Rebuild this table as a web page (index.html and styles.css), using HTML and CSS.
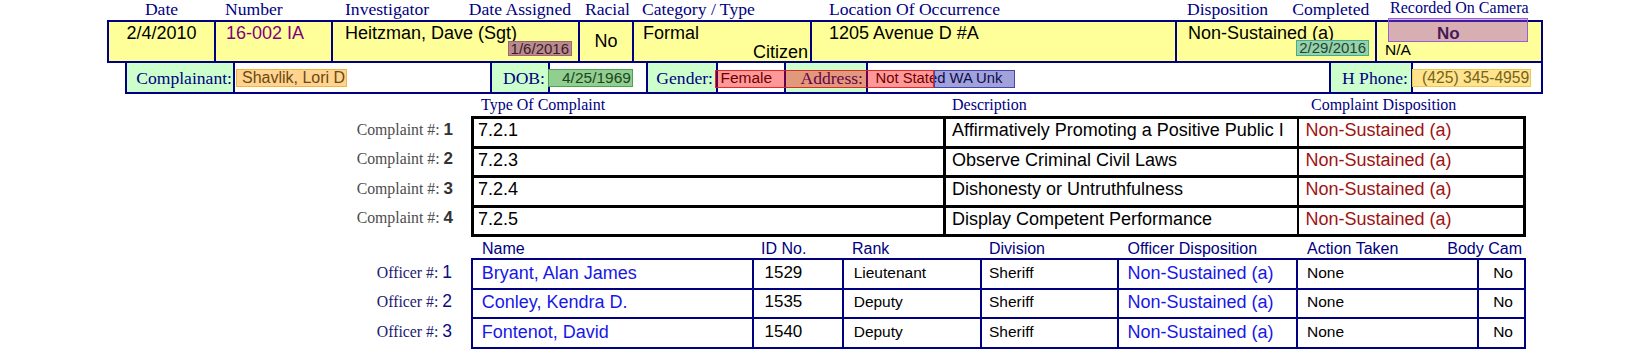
FILE: index.html
```html
<!DOCTYPE html>
<html lang="en">
<head>
<meta charset="utf-8">
<title>Case Record</title>
<link rel="stylesheet" href="styles.css">
</head>
<body>
<div class="sheet">
  <div class="top-labels">
    <div class="tl tl-date">Date</div>
    <div class="tl tl-num">Number</div>
    <div class="tl tl-inv"><span>Investigator</span><span>Date Assigned</span></div>
    <div class="tl tl-racial">Racial</div>
    <div class="tl tl-cat">Category / Type</div>
    <div class="tl tl-loc">Location Of Occurrence</div>
    <div class="tl tl-disp"><span>Disposition</span><span>Completed</span></div>
    <div class="tl tl-cam">Recorded On Camera</div>
  </div>

  <div class="case-row">
    <div class="cc cc-date">2/4/2010</div>
    <div class="cc cc-num">16-002 IA</div>
    <div class="cc cc-inv"><span>Heitzman, Dave (Sgt)</span><span class="hl hl-assigned">1/6/2016</span></div>
    <div class="cc cc-racial">No</div>
    <div class="cc cc-cat"><span>Formal</span><span class="cat-type">Citizen</span></div>
    <div class="cc cc-loc">1205 Avenue D #A</div>
    <div class="cc cc-disp"><span>Non-Sustained (a)</span><span class="hl hl-completed">2/29/2016</span></div>
    <div class="cc cc-cam"><span class="cam-val">No</span><span class="cam-na">N/A</span></div>
  </div>

  <div class="party-row">
    <div class="pl pl-first">Complainant:</div>
    <div class="pv pv-name"><span class="hl hl-name">Shavlik, Lori D</span></div>
    <div class="pl">DOB:</div>
    <div class="pv pv-dob"><span class="hl hl-dob">4/25/1969</span></div>
    <div class="pl">Gender:</div>
    <div class="pv pv-gender">Female</div>
    <div class="pl">Address:</div>
    <div class="pv pv-addr">Not Stated WA Unk</div>
    <div class="pl">H Phone:</div>
    <div class="pv pv-phone"><span class="hl hl-phone">(425) 345-4959</span></div>
  </div>

  <div class="complaints">
    <div></div>
    <div class="c-head c-h1">Type Of Complaint</div>
    <div class="c-head c-h2">Description</div>
    <div class="c-head c-h3">Complaint Disposition</div>

    <div class="c-lbl first">Complaint #: <b>1</b></div>
    <div class="c-cell c-t first">7.2.1</div>
    <div class="c-cell c-d first">Affirmatively Promoting a Positive Public I</div>
    <div class="c-cell c-s first">Non-Sustained (a)</div>

    <div class="c-lbl">Complaint #: <b>2</b></div>
    <div class="c-cell c-t">7.2.3</div>
    <div class="c-cell c-d">Observe Criminal Civil Laws</div>
    <div class="c-cell c-s">Non-Sustained (a)</div>

    <div class="c-lbl">Complaint #: <b>3</b></div>
    <div class="c-cell c-t">7.2.4</div>
    <div class="c-cell c-d">Dishonesty or Untruthfulness</div>
    <div class="c-cell c-s">Non-Sustained (a)</div>

    <div class="c-lbl">Complaint #: <b>4</b></div>
    <div class="c-cell c-t">7.2.5</div>
    <div class="c-cell c-d">Display Competent Performance</div>
    <div class="c-cell c-s">Non-Sustained (a)</div>
  </div>

  <div class="officers">
    <div></div>
    <div class="o-head oh-name">Name</div>
    <div class="o-head oh-id">ID No.</div>
    <div class="o-head oh-rank">Rank</div>
    <div class="o-head oh-div">Division</div>
    <div class="o-head oh-disp">Officer Disposition</div>
    <div class="o-head oh-act">Action Taken</div>
    <div class="o-head oh-cam">Body Cam</div>

    <div class="o-lbl first">Officer #: <span>1</span></div>
    <div class="o-cell o-name first">Bryant, Alan James</div>
    <div class="o-cell o-id first">1529</div>
    <div class="o-cell o-rank first">Lieutenant</div>
    <div class="o-cell o-div first">Sheriff</div>
    <div class="o-cell o-disp first">Non-Sustained (a)</div>
    <div class="o-cell o-act first">None</div>
    <div class="o-cell o-cam first">No</div>

    <div class="o-lbl">Officer #: <span>2</span></div>
    <div class="o-cell o-name">Conley, Kendra D.</div>
    <div class="o-cell o-id">1535</div>
    <div class="o-cell o-rank">Deputy</div>
    <div class="o-cell o-div">Sheriff</div>
    <div class="o-cell o-disp">Non-Sustained (a)</div>
    <div class="o-cell o-act">None</div>
    <div class="o-cell o-cam">No</div>

    <div class="o-lbl">Officer #: <span>3</span></div>
    <div class="o-cell o-name">Fontenot, David</div>
    <div class="o-cell o-id">1540</div>
    <div class="o-cell o-rank">Deputy</div>
    <div class="o-cell o-div">Sheriff</div>
    <div class="o-cell o-disp">Non-Sustained (a)</div>
    <div class="o-cell o-act">None</div>
    <div class="o-cell o-cam">No</div>
  </div>

  <div class="mark mark-red"></div>
  <div class="mark mark-blue"></div>
  <div class="mark mark-cam"></div>
</div>
</body>
</html>
```

FILE: styles.css
```css
html, body {
  margin: 0;
  padding: 0;
  background: #ffffff;
}

.sheet {
  position: relative;
  width: 1650px;
  height: 363px;
  overflow: hidden;
  font-family: "Liberation Sans", Arial, sans-serif;
  color: #000000;
}

/* ---------- top header labels + case row ---------- */
.top-labels,
.case-row {
  display: grid;
  grid-template-columns: 109px 117px 247px 54px 178px 365px 200px 166px;
  margin-left: 107px;
  width: 1436px;
}

.top-labels {
  height: 20px;
  font-family: "Liberation Serif", "Times New Roman", serif;
  font-size: 17.6px;
  line-height: 18px;
  color: #000080;
  white-space: nowrap;
}

.tl-date { text-align: center; }
.tl-num { padding-left: 9px; }
.tl-inv { display: flex; justify-content: space-between; padding: 0 9px 0 12px; }
.tl-racial { padding-left: 5px; }
.tl-cat { padding-left: 8px; }
.tl-loc { padding-left: 17px; }
.tl-disp { display: flex; gap: 24px; padding-left: 10px; }
.tl-cam { padding-left: 13px; font-size: 16px; line-height: 16px; }

.case-row {
  box-sizing: border-box;
  height: 43px;
  border-top: 2px solid #000080;
  border-bottom: 2px solid #000080;
  background: #ffff99;
  font-size: 18px;
  line-height: 20px;
}

.cc {
  border-right: 2px solid #000080;
  padding-top: 1px;
  white-space: nowrap;
  min-width: 0;
}

.cc-date { border-left: 2px solid #000080; text-align: center; }
.cc-num { padding-left: 10px; color: #800080; }
.cc-inv { display: flex; flex-direction: column; padding-left: 12px; }
.cc-racial {
  display: flex;
  align-items: center;
  justify-content: center;
  padding-bottom: 3px;
}
.cc-cat { display: flex; flex-direction: column; padding-left: 9px; padding-right: 2px; }
.cat-type { align-self: flex-end; margin-top: -1px; }
.cc-loc { padding-left: 17px; }
.cc-disp { display: flex; flex-direction: column; padding-left: 11px; }
.cc-cam { display: flex; flex-direction: column; padding-left: 8px; }

.cam-val {
  font-weight: bold;
  font-size: 17px;
  line-height: 17px;
  padding-top: 2px;
  padding-left: 52px;
}
.cam-na {
  font-size: 15.5px;
  line-height: 16px;
  margin-top: 0;
}

/* highlighted value boxes */
.hl {
  box-sizing: border-box;
  border: 1px solid;
  white-space: nowrap;
}

.hl-assigned {
  align-self: flex-end;
  margin-top: -2px;
  margin-right: 6px;
  padding: 0 2px;
  font-size: 15px;
  line-height: 13px;
  background: #b98b8f;
  border-color: #a0686e;
  color: #3a1a26;
}

.hl-completed {
  align-self: flex-end;
  margin-top: -3px;
  margin-right: 6px;
  padding: 0 2px;
  font-size: 15px;
  line-height: 14px;
  background: #97d1a7;
  border-color: #3fae97;
  color: #1c4438;
}

/* ---------- complainant row ---------- */
.party-row {
  box-sizing: border-box;
  display: grid;
  grid-template-columns: 110px 255px 60px 96px 72px 66px 84px 461px 84px 130px;
  margin-left: 125px;
  width: 1418px;
  height: 31px;
  border-bottom: 2px solid #000080;
}

.pl {
  display: flex;
  align-items: center;
  justify-content: flex-end;
  padding-right: 3px;
  background: #ccffcc;
  border-left: 2px solid #000080;
  border-right: 2px solid #000080;
  font-family: "Liberation Serif", "Times New Roman", serif;
  font-size: 17.6px;
  line-height: 20px;
  color: #000080;
  white-space: nowrap;
}
.pl-first { padding-right: 1px; }

.pv {
  display: flex;
  align-items: center;
  font-size: 16px;
  line-height: 18px;
  white-space: nowrap;
  min-width: 0;
}

.hl-name {
  margin-left: 1px;
  padding: 0 1px 0 5px;
  line-height: 16px;
  background: #ffd48e;
  border-color: #f5b23f;
  color: #6b4814;
}

.pv-dob { font-size: 15.5px; }
.hl-dob {
  margin-left: -2px;
  padding: 0 1px 0 13px;
  line-height: 16px;
  background: #90cf90;
  border-color: #4ea24e;
  color: #1d441d;
}

.pv-gender { padding-left: 2.5px; font-size: 15.5px; }
.pv-addr { padding-left: 7.5px; font-size: 14.8px; }

.pv-phone { border-right: 2px solid #000080; font-size: 15.7px; }
.hl-phone {
  margin-left: -1px;
  padding: 0 1px 0 9px;
  line-height: 16px;
  background: #ffe38d;
  border-color: #f2c84c;
  color: #75631c;
}

/* ---------- complaints table ---------- */
.complaints {
  display: grid;
  grid-template-columns: 131px 475px 353px 227px;
  grid-template-rows: 22px;
  margin-left: 340px;
  width: 1186px;
}

.c-head {
  padding-top: 3px;
  font-family: "Liberation Serif", "Times New Roman", serif;
  font-size: 16px;
  line-height: 16px;
  color: #000080;
  white-space: nowrap;
}
.c-h1 { padding-left: 10px; }
.c-h2 { padding-left: 6px; }
.c-h3 { padding-left: 12px; }

.c-lbl,
.c-cell {
  box-sizing: border-box;
  height: 29.5px;
  border-bottom: 3px solid #000000;
  white-space: nowrap;
}
.c-lbl.first,
.c-cell.first {
  height: 32.5px;
  border-top: 3px solid #000000;
}

.c-lbl {
  border-color: transparent;
  text-align: right;
  padding-right: 18px;
  padding-top: 0.5px;
  font-family: "Liberation Serif", "Times New Roman", serif;
  font-size: 15.8px;
  line-height: 20px;
  color: #4d4d4d;
}
.c-lbl.first { border-top-color: transparent; }
.c-lbl b {
  font-family: "Liberation Sans", Arial, sans-serif;
  font-size: 17px;
  color: #333333;
}

.c-cell {
  padding-top: 1px;
  font-size: 18px;
  line-height: 20px;
  overflow: hidden;
}
.c-t {
  border-left: 3px solid #000000;
  border-right: 3px solid #000000;
  padding-left: 4px;
}
.c-d {
  border-right: 2px solid #000000;
  padding-left: 6px;
}
.c-s {
  border-right: 3px solid #000000;
  padding-left: 6.5px;
  color: #a01212;
}

/* ---------- officers table ---------- */
.officers {
  display: grid;
  grid-template-columns: 131px 283px 90px 138px 137px 179px 181px 47px;
  grid-template-rows: 21px;
  margin-left: 340px;
  width: 1186px;
}

.o-head {
  padding-top: 3px;
  font-size: 16px;
  line-height: 17px;
  color: #000080;
  white-space: nowrap;
}
.oh-name { padding-left: 11px; }
.oh-id { padding-left: 7px; }
.oh-rank { padding-left: 8px; }
.oh-div { padding-left: 7px; }
.oh-disp { padding-left: 8.5px; }
.oh-act { padding-left: 9px; }
.oh-cam { display: flex; justify-content: flex-end; padding-right: 4px; }

.o-lbl,
.o-cell {
  box-sizing: border-box;
  height: 29.5px;
  border-bottom: 2px solid #000080;
  white-space: nowrap;
}
.o-lbl.first,
.o-cell.first {
  height: 31.5px;
  border-top: 2px solid #000080;
}

.o-lbl {
  border-color: transparent;
  text-align: right;
  padding-right: 19px;
  padding-top: 1.5px;
  font-family: "Liberation Serif", "Times New Roman", serif;
  font-size: 15.8px;
  line-height: 20px;
  color: #1a1a70;
}
.o-lbl.first { border-top-color: transparent; }
.o-lbl span {
  font-family: "Liberation Sans", Arial, sans-serif;
  font-size: 17.5px;
  color: #0c0c80;
}

.o-cell {
  border-right: 2px solid #000080;
  padding-top: 2.5px;
  font-size: 15.5px;
  line-height: 20px;
  overflow: hidden;
}
.o-name {
  border-left: 2px solid #000080;
  padding-left: 8.7px;
  font-size: 18px;
  color: #1717e8;
}
.o-id { padding-left: 10.5px; font-size: 17px; }
.o-rank { padding-left: 9.7px; }
.o-div { padding-left: 7px; }
.o-disp { padding-left: 8.5px; font-size: 18px; color: #1717e8; }
.o-act { padding-left: 9px; }
.o-cam { text-align: right; padding-right: 11px; }

/* ---------- annotation overlays ---------- */
.mark {
  position: absolute;
  box-sizing: border-box;
  pointer-events: none;
}
.mark-red {
  left: 715px;
  top: 70px;
  width: 219px;
  height: 18px;
  background: rgba(255, 0, 0, 0.4);
  border: 1px solid rgba(225, 30, 30, 0.9);
}
.mark-blue {
  left: 934px;
  top: 70px;
  width: 81px;
  height: 18px;
  background: rgba(30, 30, 170, 0.42);
  border: 1px solid #4646a8;
}
.mark-cam {
  left: 1388px;
  top: 18px;
  width: 140px;
  height: 24px;
  background: rgba(160, 62, 213, 0.42);
  border: 1px solid #9a5fd0;
}
```
